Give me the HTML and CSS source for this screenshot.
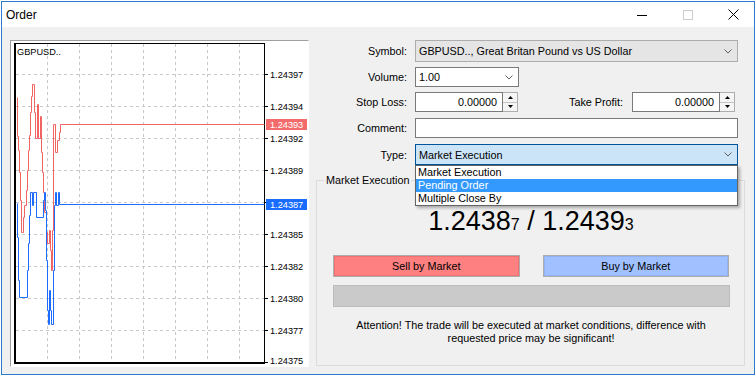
FILE: index.html
```html
<!DOCTYPE html>
<html>
<head>
<meta charset="utf-8">
<link rel="stylesheet" href="styles.css">
</head>
<body>
<div class="window">
  <div class="titlebar">
    <span class="title">Order</span>
    <div class="caption">
      <div class="cap-btn cap-min"><svg width="10" height="10" viewBox="0 0 10 10"><path d="M0 5.5H10" stroke="#000" stroke-width="1"/></svg></div>
      <div class="cap-btn cap-max"><svg width="10" height="10" viewBox="0 0 10 10"><rect x="0.5" y="0.5" width="9" height="9" fill="none" stroke="#cccccc" stroke-width="1"/></svg></div>
      <div class="cap-btn cap-close"><svg width="11" height="11" viewBox="0 0 11 11"><path d="M0.5 0.5L10.5 10.5M10.5 0.5L0.5 10.5" stroke="#000" stroke-width="1"/></svg></div>
    </div>
  </div>
  <div class="content">
    <div class="chart">
      <svg width="297" height="325" viewBox="11 41 297 325">
        <g stroke="#c8c8c8" stroke-width="1" stroke-dasharray="3 3" fill="none" shape-rendering="crispEdges">
          <path d="M16 74.5H264M16 106.5H264M16 138.5H264M16 170.5H264M16 202.5H264M16 234.5H264M16 266.5H264M16 298.5H264M16 330.5H264"/>
          <path d="M47.5 44V362M79.5 44V362M111.5 44V362M143.5 44V362M175.5 44V362M207.5 44V362M239.5 44V362"/>
        </g>
        <g fill="#000" shape-rendering="crispEdges">
          <rect x="14" y="43" width="2" height="321"/>
          <rect x="14" y="362" width="251" height="2"/>
          <rect x="16" y="43" width="249" height="1"/>
          <rect x="264" y="43" width="1" height="321"/>
          <rect x="265" y="74" width="3" height="1"/>
          <rect x="265" y="106" width="3" height="1"/>
          <rect x="265" y="138" width="3" height="1"/>
          <rect x="265" y="170" width="3" height="1"/>
          <rect x="265" y="202" width="3" height="1"/>
          <rect x="265" y="234" width="3" height="1"/>
          <rect x="265" y="266" width="3" height="1"/>
          <rect x="265" y="298" width="3" height="1"/>
          <rect x="265" y="330" width="3" height="1"/>
          <rect x="265" y="362" width="3" height="1"/>
        </g>
        <g transform="translate(0.5 0.5)" fill="none" stroke-width="1" stroke-linejoin="miter">
          <polyline stroke="#f06464" points="17,97 17,136 18,136 18,150 19,150 19,172 20,172 20,200 21,200 21,232 23,232 23,217 24,217 24,205 26,205 26,190 27,190 27,170 28,170 28,150 29,150 29,135 30,135 30,112 31,112 31,96 32,96 32,84 34,84 34,112 35,112 35,138 37,138 37,104 38,104 38,138 40,138 40,116 41,116 41,152 42,152 42,172 43,172 43,192 44,192 44,212 46,212 46,232 47,232 47,243 49,243 49,230 50,230 50,250 51,250 51,270 52,270 52,230 53,230 53,124 55,124 55,152 57,152 57,140 59,140 59,132 60,132 60,124 264,124"/>
          <polyline stroke="#1e6cff" points="17,203 17,237 18,237 18,260 18,260 18,280 19,280 19,297 27,297 27,270 28,270 28,243 29,243 29,215 30,215 30,192 32,192 32,205 33,205 33,192 36,192 36,217 43,217 43,200 44,200 44,192 45,192 45,210 46,210 46,260 47,260 47,310 48,310 48,324 49,324 49,290 50,290 50,310 51,310 51,324 53,324 53,270 54,270 54,205 55,205 55,192 56,192 56,205 58,205 58,192 59,192 59,204 264,204"/>
        </g>
        <g class="axis-text" fill="#000">
          <text x="17" y="55">GBPUSD..</text>
          <text x="270" y="78">1.24397</text>
          <text x="270" y="110">1.24394</text>
          <text x="270" y="142">1.24392</text>
          <text x="270" y="174">1.24389</text>
          <text x="270" y="238">1.24385</text>
          <text x="270" y="270">1.24382</text>
          <text x="270" y="302">1.24380</text>
          <text x="270" y="334">1.24377</text>
          <text x="270" y="364">1.24375</text>
        </g>
        <rect x="266" y="119" width="41" height="11" fill="#f36b6b"/>
        <text class="axis-text" x="270" y="128" fill="#fff">1.24393</text>
        <rect x="266" y="199" width="41" height="11" fill="#1a6cff"/>
        <text class="axis-text" x="270" y="208" fill="#fff">1.24387</text>
      </svg>
    </div>

    <div class="form">
      <div class="row row-1">
        <span class="lbl">Symbol:</span>
        <div class="combo combo-disabled combo-wide">
          <span class="val">GBPUSD.., Great Britan Pound vs US Dollar</span>
          <svg class="chev" width="8" height="5" viewBox="0 0 8 5"><polyline points="0.5,0.5 4,4 7.5,0.5" fill="none" stroke="#606060"/></svg>
        </div>
      </div>
      <div class="row row-2">
        <span class="lbl">Volume:</span>
        <div class="combo combo-volume">
          <span class="val">1.00</span>
          <svg class="chev" width="8" height="5" viewBox="0 0 8 5"><polyline points="0.5,0.5 4,4 7.5,0.5" fill="none" stroke="#606060"/></svg>
        </div>
      </div>
      <div class="row row-3">
        <span class="lbl">Stop Loss:</span>
        <div class="spin">
          <div class="spin-inp">0.00000</div>
          <div class="spinner">
            <div class="half"><svg width="5" height="3" viewBox="0 0 5 3"><polygon points="2.5,0 5,3 0,3" fill="#000"/></svg></div>
            <div class="half half-low"><svg width="5" height="3" viewBox="0 0 5 3"><polygon points="0,0 5,0 2.5,3" fill="#000"/></svg></div>
          </div>
        </div>
        <span class="lbl lbl-tp">Take Profit:</span>
        <div class="spin">
          <div class="spin-inp">0.00000</div>
          <div class="spinner">
            <div class="half"><svg width="5" height="3" viewBox="0 0 5 3"><polygon points="2.5,0 5,3 0,3" fill="#000"/></svg></div>
            <div class="half half-low"><svg width="5" height="3" viewBox="0 0 5 3"><polygon points="0,0 5,0 2.5,3" fill="#000"/></svg></div>
          </div>
        </div>
      </div>
      <div class="row row-4">
        <span class="lbl">Comment:</span>
        <div class="textbox"></div>
      </div>
      <div class="row row-5">
        <span class="lbl">Type:</span>
        <div class="combo-wrap">
          <div class="combo combo-focus combo-wide">
            <span class="val">Market Execution</span>
            <svg class="chev" width="8" height="5" viewBox="0 0 8 5"><polyline points="0.5,0.5 4,4 7.5,0.5" fill="none" stroke="#606060"/></svg>
          </div>
          <div class="dropdown">
            <div class="item">Market Execution</div>
            <div class="item item-sel">Pending Order</div>
            <div class="item">Multiple Close By</div>
          </div>
        </div>
      </div>

      <fieldset class="group">
        <legend>Market Execution</legend>
        <div class="group-body">
          <div class="price">1.2438<span class="small">7</span> / 1.2439<span class="small">3</span></div>
          <div class="btns">
            <div class="btn btn-sell"><span>Sell by Market</span></div>
            <div class="btn btn-buy"><span>Buy by Market</span></div>
          </div>
          <div class="bar"></div>
          <p class="note">Attention! The trade will be executed at market conditions, difference with<br>requested price may be significant!</p>
        </div>
      </fieldset>
    </div>
  </div>
</div>
</body>
</html>
```

FILE: styles.css
```css
html, body {
  margin: 0;
  padding: 0;
  background: #ffffff;
}

body {
  font-family: "Liberation Sans", Arial, sans-serif;
  font-size: 10.8px;
  color: #000;
}

.window {
  margin: 1px 0 0 1px;
  width: 754px;
  height: 374px;
  box-sizing: border-box;
  border: 1px solid #2b7bd3;
  display: flex;
  flex-direction: column;
  overflow: hidden;
}

/* Title bar */
.titlebar {
  height: 25px;
  flex: 0 0 25px;
  background: #ffffff;
  display: flex;
  align-items: center;
}

.title {
  padding-left: 4px;
  font-size: 12px;
}

.caption {
  margin-left: auto;
  display: flex;
  height: 25px;
}

.cap-btn {
  display: flex;
  align-items: center;
  justify-content: center;
  height: 25px;
}

.cap-btn svg { display: block; }

.cap-min { width: 46px; }
.cap-max { width: 45px; }
.cap-close { width: 44px; padding-left: 2px; box-sizing: border-box; }

/* Content area */
.content {
  flex: 1;
  background: #f0f0f0;
  display: flex;
  align-items: flex-start;
  padding: 13px 0 0 8px;
}

.chart {
  width: 299px;
  height: 327px;
  box-sizing: border-box;
  border: 1px solid;
  border-color: #a0a0a0 #ffffff #ffffff #a0a0a0;
  background: #ffffff;
}

.chart svg { display: block; }

.axis-text {
  font-family: "Liberation Sans", Arial, sans-serif;
  font-size: 9.2px;
}

/* Form */
.form {
  margin-left: 7px;
  width: 429px;
  display: flex;
  flex-direction: column;
}

.row {
  display: flex;
  align-items: center;
}

.row-1 { height: 22px; margin-bottom: 5px; }
.row-2 { height: 20px; margin-bottom: 5px; }
.row-3 { height: 20px; margin-bottom: 6px; }
.row-4 { height: 20px; margin-bottom: 6px; }
.row-5 { height: 21px; position: relative; z-index: 2; }

.lbl {
  width: 91px;
  margin-right: 8px;
  text-align: right;
  white-space: nowrap;
}

.lbl-tp {
  width: 105px;
  margin-right: 9px;
}

.combo {
  box-sizing: border-box;
  height: 100%;
  display: flex;
  align-items: center;
  padding: 0 5px 0 3px;
  border: 1px solid #7a7a7a;
  background: #ffffff;
  white-space: nowrap;
}

.combo .val { flex: 1; }
.combo .chev { display: block; }

.combo-wide { width: 323px; }
.combo-volume { width: 104px; }

.combo-disabled {
  background: #e5e5e5;
  border-color: #adadad;
}

.combo-focus {
  background: #cce4f7;
  border-color: #005499;
}

.spin {
  display: flex;
  height: 20px;
}

.spin-inp {
  width: 88px;
  box-sizing: border-box;
  border: 1px solid #7a7a7a;
  background: #ffffff;
  text-align: right;
  padding-right: 5px;
  line-height: 18px;
}

.spinner {
  width: 15px;
  box-sizing: border-box;
  border: 1px solid #adadad;
  border-left: none;
  background: #f5f5f5;
  display: flex;
  flex-direction: column;
}

.spinner .half {
  flex: 1;
  display: flex;
  align-items: center;
  justify-content: center;
}

.spinner .half-low {
  border-top: 1px solid #c4c4c4;
}

.spinner svg { display: block; }

.textbox {
  width: 323px;
  height: 20px;
  box-sizing: border-box;
  border: 1px solid #7a7a7a;
  background: #ffffff;
}

.combo-wrap {
  position: relative;
  width: 323px;
  height: 21px;
}

.dropdown {
  position: absolute;
  top: 100%;
  left: 0;
  width: 323px;
  box-sizing: border-box;
  border: 1px solid #646464;
  background: #ffffff;
  box-shadow: 2px 2px 3px rgba(0, 0, 0, 0.3);
}

.dropdown .item {
  height: 13px;
  line-height: 13px;
  padding-left: 2px;
  white-space: nowrap;
}

.dropdown .item-sel {
  background: #3399ff;
  color: #ffffff;
}

/* Group box */
.group {
  margin: 8px 0 0 0;
  padding: 0;
  min-width: 0;
  width: 429px;
  box-sizing: border-box;
  border: 1px solid #dcdcdc;
}

.group legend {
  margin-left: 7px;
  padding: 0 2px;
  line-height: 14px;
}

.group-body {
  padding: 0 15px 20px 16px;
}

.price {
  margin-top: 19px;
  height: 30px;
  font-size: 27px;
  line-height: 30px;
  text-align: center;
  white-space: nowrap;
}

.price .small {
  font-size: 16px;
  line-height: 16px;
}

.btns {
  margin-top: 19px;
  display: flex;
  gap: 23px;
}

.btn {
  height: 22px;
  box-sizing: border-box;
  border: 1px solid #adadad;
}

.btn span {
  display: flex;
  height: 100%;
  box-sizing: border-box;
  align-items: center;
  justify-content: center;
}

.btn-sell { width: 187px; }
.btn-sell span {
  background: #ff8080;
  border: 1px solid #f07070;
}

.btn-buy { width: 187px; }
.btn-buy span {
  background: #a0c0ff;
  border: 1px solid #90b3f5;
}

.bar {
  margin-top: 8px;
  width: 397px;
  height: 22px;
  box-sizing: border-box;
  background: #cacaca;
  border: 1px solid #bcbcbc;
}

.note {
  margin: 12px 0 0 0;
  line-height: 13px;
  text-align: center;
}
```
